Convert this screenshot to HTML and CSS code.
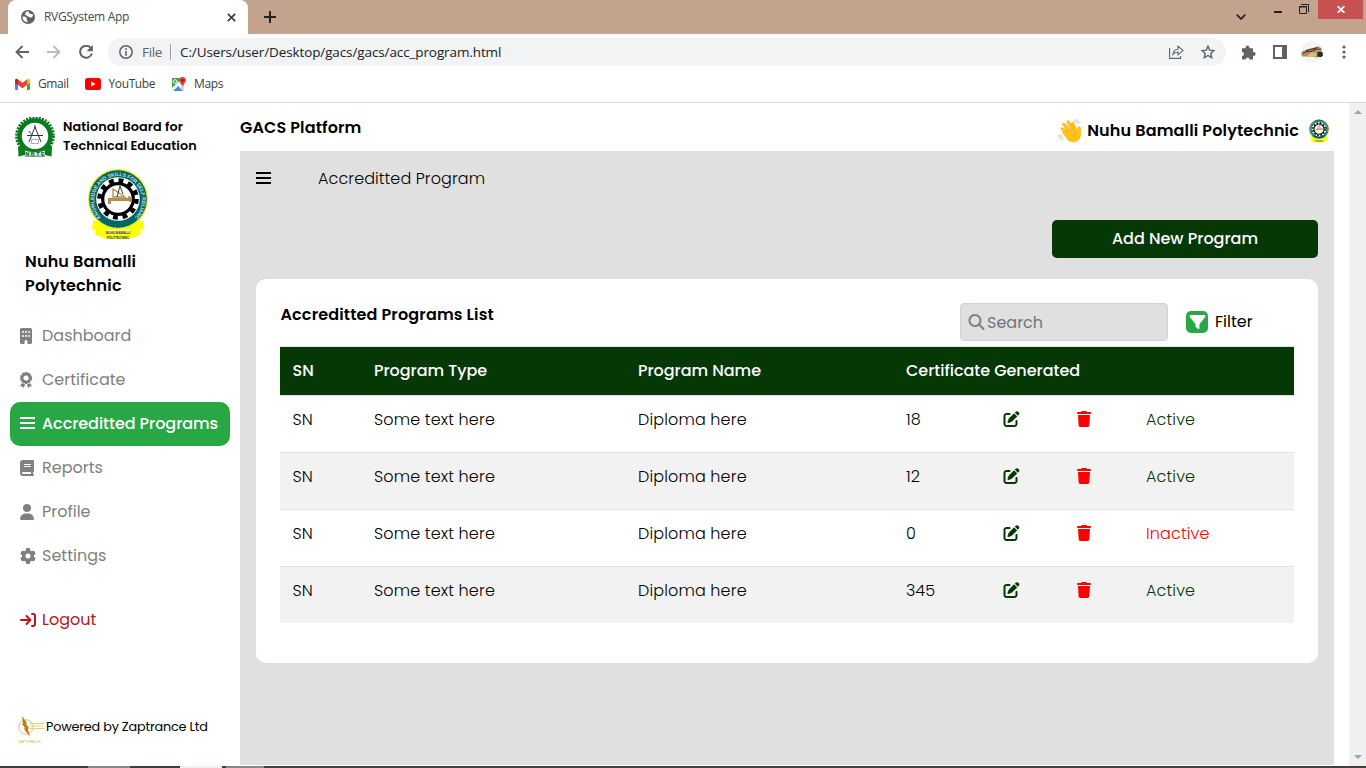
FILE: index.html
```html
<!DOCTYPE html>
<html lang="en">
<head>
<meta charset="utf-8">
<title>RVGSystem App</title>
<link rel="stylesheet" href="styles.css">
</head>
<body>
<svg class="defs" width="0" height="0">
  <defs>
    <symbol id="i-edit" viewBox="0 0 512 512"><path d="M471.6 21.7c-21.9-21.9-57.3-21.9-79.2 0L362.3 51.7l97.9 97.9 30.1-30.1c21.9-21.9 21.9-57.3 0-79.2L471.6 21.7zm-299.2 220c-6.1 6.1-10.8 13.6-13.5 21.9l-29.6 88.8c-2.9 8.6-.6 18.1 5.8 24.6s15.9 8.7 24.6 5.8l88.8-29.6c8.2-2.7 15.7-7.4 21.9-13.5L437.7 172.3 339.7 74.3 172.4 241.7zM96 64C43 64 0 107 0 160V416c0 53 43 96 96 96H352c53 0 96-43 96-96V320c0-17.7-14.3-32-32-32s-32 14.3-32 32v96c0 17.7-14.3 32-32 32H96c-17.7 0-32-14.3-32-32V160c0-17.7 14.3-32 32-32h96c17.7 0 32-14.3 32-32s-14.3-32-32-32H96z"/></symbol>
    <symbol id="i-trash" viewBox="0 0 448 512"><path d="M135.2 17.7L128 32H32C14.3 32 0 46.3 0 64S14.3 96 32 96H416c17.7 0 32-14.3 32-32s-14.3-32-32-32H320l-7.2-14.3C307.4 6.8 296.3 0 284.2 0H163.8c-12.1 0-23.2 6.8-28.6 17.7zM416 128H32L53.2 467c1.6 25.3 22.6 45 47.9 45H346.9c25.3 0 46.3-19.7 47.9-45L416 128z"/></symbol>
    <symbol id="i-bars" viewBox="0 0 14 16" preserveAspectRatio="none"><path d="M0 2h14v2H0zM0 7h14v2H0zM0 12h14v2H0z"/></symbol>
    <symbol id="seal" viewBox="0 0 60 71">
      <path d="M5 52l-1 9 4-1-1 5c4 3 9 3.500 12 5h22c3-1.500 8-2 12-5l-1-5 4 1-1-9z" fill="#ffff00"/>
      <circle cx="30" cy="30" r="30" fill="#eeee18"/>
      <circle cx="30" cy="30" r="28.8" fill="#006666"/>
      <circle cx="30" cy="30" r="21.8" fill="#fff"/>
      <circle cx="30" cy="30" r="18.5" fill="none" stroke="#000" stroke-width="4.5" stroke-dasharray="4.85 4.835"/>
      <circle cx="30" cy="30" r="15.3" fill="none" stroke="#000" stroke-width="3.2"/>
      <path d="M20 29h20v-2l3 1v5l-3-1H23v3h-3z" fill="#b28d50"/>
      <path d="M25 28v-8l12 8z" fill="none" stroke="#b28d50" stroke-width="1.3"/>
      <path d="M32 17l-3 11M32 17l3 8" stroke="#222" stroke-width=".9" fill="none"/>
      <path d="M18 60.500h24v3.500H18z" fill="#ffff90"/>
      <path id="seal-arc" d="M13.800 48.800A24 24 0 1 1 46.200 48.800" fill="none"/>
      <text class="seal-motto"><textPath href="#seal-arc" startOffset="1">KNOWLEDGE AND SKILLS FOR SELF RELIANCE</textPath></text>
      <text class="seal-name" x="30" y="65">NUHU BAMALLI</text>
      <text class="seal-name" x="30" y="69.500">POLYTECHNIC</text>
    </symbol>
  </defs>
</svg>
<div class="window">
  <div class="tabstrip">
    <div class="tab">
      <svg class="globe" viewBox="0 0 14 14"><circle cx="7" cy="7" r="7" fill="#5f6368"/><path d="M1.500 6.500l3 .2 1.300 1.600v2l1.400 1.900-2.700-.5C2.600 11 1.300 9 1.500 6.500zM5 1.800l3-.4-.2 1.700 1.800 1 2.600.2-1 2.900-1.500.3-2.200-.8L5.500 5.500 3.800 4.600z" fill="#fff"/></svg>
      <span class="tab-title">RVGSystem App</span>
      <svg class="tab-close" viewBox="0 0 9 9"><path d="M.8.8l7.400 7.400M8.200.8L.8 8.200" stroke="#3c4043" stroke-width="1.700"/></svg>
    </div>
    <svg class="new-tab" viewBox="0 0 12 12"><path d="M6 0v12M0 6h12" stroke="#222" stroke-width="2"/></svg>
    <div class="caption">
      <svg class="cap-chevron" viewBox="0 0 10 6"><path d="M.7.7L5 5 9.300.7" fill="none" stroke="#2a2522" stroke-width="1.800"/></svg>
      <svg class="cap-min" viewBox="0 0 8 2"><path d="M0 0h8v2H0z" fill="#222"/></svg>
      <svg class="cap-max" viewBox="0 0 10 10"><path d="M.5 3h7v6.500h-7zM0 2.500h8M2 .500h7.500V8" fill="none" stroke="#222"/></svg>
      <div class="cap-close"><svg viewBox="0 0 8 7"><path d="M.5 0l7 7M7.500 0l-7 7" stroke="#fff" stroke-width="1.700"/></svg></div>
    </div>
  </div>
  <div class="toolbar">
    <svg class="nav-icon" viewBox="0 0 14 14"><path d="M14 7H1.500M7.500 1L1.500 7l6 6" fill="none" stroke="#5f6368" stroke-width="1.900"/></svg>
    <svg class="nav-icon" viewBox="0 0 14 14"><path d="M0 7h12.500M6.500 1l6 6-6 6" fill="none" stroke="#bababa" stroke-width="1.900"/></svg>
    <svg class="nav-icon" viewBox="0 0 14 14"><path d="M12 3.200A6 6 0 1 0 12.900 8.500" fill="none" stroke="#5f6368" stroke-width="2"/><path d="M13.800 0v6.200H7.600z" fill="#5f6368"/></svg>
    <div class="omnibox">
      <svg class="info" viewBox="0 0 14 14"><circle cx="7" cy="7" r="6.200" fill="none" stroke="#5f6368" stroke-width="1.500"/><path d="M6.200 3.300h1.600v1.600H6.200zM6.200 6h1.600v4.700H6.200z" fill="#5f6368"/></svg>
      <span class="scheme">File</span>
      <span class="url">C:/Users/user/Desktop/gacs/gacs/acc_program.html</span>
      <svg class="share" viewBox="0 0 15 14"><path d="M.6 3v10.400h11V11M4 9.500C4.300 6.500 6 4.300 9 4.200V1.200l5 4.400-5 4.200V7C7 6.900 5.300 7.700 4 9.500z" fill="none" stroke="#5f6368" stroke-width="1.100"/></svg>
      <svg class="star" viewBox="0 0 14 14"><path d="M7 1.200l1.700 3.900 4.300.4-3.200 2.900.9 4.300L7 10.500l-3.700 2.200.9-4.300L1 5.500l4.300-.4z" fill="none" stroke="#5f6368" stroke-width="1.400"/></svg>
    </div>
    <svg class="puzzle" viewBox="0 0 15 15"><path d="M1 3.200h3.600a2 2 0 1 1 3.800 0H12V7a2 2 0 1 1 0 3.800v3.700H8.500a1.900 1.900 0 0 0-3.800 0H1V11a1.900 1.900 0 0 0 0-3.900z" fill="#5f6368"/></svg>
    <svg class="panel" viewBox="0 0 14 14"><path d="M1 1h12v12H1z" fill="#fff" stroke="#5f6368" stroke-width="2"/><path d="M9 0h5v14H9z" fill="#5f6368"/></svg>
    <svg class="avatar" viewBox="0 0 22 22"><circle cx="11" cy="11" r="11" fill="#f4f4f5"/><path d="M1 10l17-5 3 3-1 4-18 3z" fill="#caa878"/><path d="M0 12l12-3 10 3v3l-6 1.500-6-1H1z" fill="#b08b59"/><path d="M2 12l5-2 3 .5 4-2 6-.5M5 9.500l12-3" stroke="#433124" stroke-width="1.100" fill="none"/><path d="M11 11l7 2-5 3-7-1z" fill="#d6b98c"/><circle cx="19" cy="13.300" r="2.800" fill="#2b2b2e"/></svg>
    <svg class="kebab" viewBox="0 0 4 14"><circle cx="2" cy="2" r="1.600"/><circle cx="2" cy="7" r="1.600"/><circle cx="2" cy="12" r="1.600"/></svg>
  </div>
  <div class="bookmarks">
    <div class="bm bm-gmail"><svg viewBox="0 0 15 12"><path d="M0 2h3v10H1a1 1 0 0 1-1-1z" fill="#4285f4"/><path d="M12 2h3v9a1 1 0 0 1-1 1h-2z" fill="#34a853"/><path d="M12 1.500c1.200-1.200 3-.6 3 1V5l-3 2z" fill="#fbbc04"/><path d="M0 2.500c0-1.600 1.800-2.200 3-1V7L0 5z" fill="#c5221f"/><path d="M3 1.500l4.500 3.300L12 1.500V7l-4.500 3.200L3 7z" fill="#ea4335"/></svg><span>Gmail</span></div>
    <div class="bm bm-yt"><svg viewBox="0 0 16 12"><rect width="16" height="12" rx="2.500" fill="#f00"/><path d="M6.200 3.500v5L10.500 6z" fill="#fff"/></svg><span>YouTube</span></div>
    <div class="bm bm-maps"><svg viewBox="0 0 15 15"><path d="M1 1h12v13H1z" fill="#34a853"/><path d="M0 14L9 5l5 8-1 1z" fill="#f1f3f4"/><path d="M2 14l5-5 5 5z" fill="#4285f4"/><path d="M1 11l8-8 2 2-9 9H1z" fill="#f1f3f4"/><path d="M1 1h8L1 10z" fill="#34a853"/><path d="M13 8v6h-1L8.500 9.500z" fill="#dadce0"/><circle cx="4" cy="4.500" r="1.800" fill="none" stroke="#fff" stroke-width="1"/><path d="M11.500 0A3.300 3.300 0 0 0 8 3.500C8 6 11 6.500 11.500 10 12 6.500 15 6 15 3.500A3.300 3.300 0 0 0 11.500 0z" fill="#ea4335"/><circle cx="11.500" cy="3.400" r="1.300" fill="#8c1c13"/></svg><span>Maps</span></div>
  </div>
  <div class="viewport">
    <aside class="sidebar">
      <div class="brand">
        <svg class="nbte" viewBox="0 0 40 41"><circle cx="20" cy="19" r="18.500" fill="none" stroke="#0a7a1c" stroke-width="2.800" stroke-dasharray="2 1.230"/><circle cx="20" cy="19" r="15.500" fill="none" stroke="#0a7a1c" stroke-width="4.500"/><path d="M3 30l5-3c7 7 17 7 24 0l5 3-.5 9.500L30 38v2H10v-2l-6.500 1.500z" fill="#0c7d1e"/><path d="M10 33.500c6 2 14 2 20 0V39.500H10z" fill="#cfe3d2"/><path d="M20 8v3M20 10l-6 15M20 10l6 15M12 18.500h16M14 14l2.500 3.500" stroke="#333" stroke-width="1" fill="none"/><path d="M16.500 22.500h7v4h-7z" fill="#fff" stroke="#777" stroke-width=".6"/><text class="nbte-text" x="20" y="38.700">N B T E</text></svg>
        <div class="brand-name">National Board for<br>Technical Education</div>
      </div>
      <svg class="school-seal"><use href="#seal"/></svg>
      <div class="school-name">Nuhu Bamalli<br>Polytechnic</div>
      <nav class="menu">
        <a class="item"><svg class="w12" viewBox="0 0 12 16"><path fill-rule="evenodd" d="M1.500 0h9A1.500 1.500 0 0 1 12 1.500v13a1.500 1.500 0 0 1-1.500 1.500H7.500v-2.500a1.500 1.500 0 0 0-3 0V16h-3A1.500 1.500 0 0 1 0 14.500v-13A1.500 1.500 0 0 1 1.500 0zM2 3.200v1.600h2V3.200zM5 3.200v1.600h2V3.200zM8 3.200v1.600h2V3.200zM2 7.200v1.600h2V7.200zM5 7.200v1.600h2V7.200zM8 7.200v1.600h2V7.200z"/></svg><span>Dashboard</span></a>
        <a class="item"><svg class="w12" viewBox="0 0 12 16"><circle cx="6" cy="6" r="4" fill="none" stroke="currentColor" stroke-width="2.800"/><circle cx="6" cy="6" r="5.200" fill="none" stroke="currentColor" stroke-width="1.600" stroke-dasharray="2.500 .767"/><path d="M1.500 11.300L0 14.500l2.100-.2L3.500 16l1.800-3.500zM10.500 11.300l1.500 3.200-2.100-.2L8.500 16l-1.800-3.500z"/></svg><span>Certificate</span></a>
        <a class="item active"><svg class="w15"><use href="#i-bars"/></svg><span>Accreditted Programs</span></a>
        <a class="item"><svg viewBox="0 0 14 16"><path fill-rule="evenodd" d="M3 0h10a1 1 0 0 1 1 1v10a1 1 0 0 1-1 1v2a1 1 0 1 1 0 2H3a3 3 0 0 1-3-3V3a3 3 0 0 1 3-3zM3 12a1 1 0 0 0 0 2h8v-2zM4.500 4a.5.5 0 0 0 0 1h6a.5.5 0 0 0 0-1zM4.500 6a.5.5 0 0 0 0 1h6a.5.5 0 0 0 0-1z"/></svg><span>Reports</span></a>
        <a class="item"><svg viewBox="0 0 448 512"><path d="M224 256A128 128 0 1 0 224 0a128 128 0 1 0 0 256zm-45.700 48C79.800 304 0 383.800 0 482.300C0 498.700 13.300 512 29.700 512H418.300c16.400 0 29.700-13.300 29.700-29.700C448 383.800 368.200 304 269.700 304H178.300z"/></svg><span>Profile</span></a>
        <a class="item"><svg class="w16" viewBox="0 0 512 512"><path d="M495.900 166.600c3.200 8.700 .5 18.400-6.400 24.600l-43.300 39.400c1.100 8.300 1.700 16.800 1.700 25.400s-.6 17.100-1.700 25.400l43.300 39.400c6.900 6.200 9.600 15.900 6.400 24.600c-4.400 11.900-9.700 23.300-15.800 34.300l-4.700 8.100c-6.600 11-14 21.400-22.100 31.200c-5.900 7.200-15.700 9.600-24.500 6.800l-55.700-17.700c-13.400 10.300-28.200 18.900-44 25.400l-12.500 57.100c-2 9.100-9 16.300-18.200 17.800c-13.800 2.300-28 3.500-42.500 3.500s-28.700-1.200-42.500-3.500c-9.200-1.500-16.200-8.700-18.200-17.800l-12.500-57.100c-15.800-6.500-30.600-15.100-44-25.400L83.100 425.900c-8.800 2.800-18.600 .3-24.500-6.800c-8.100-9.800-15.500-20.200-22.100-31.200l-4.700-8.100c-6.100-11-11.400-22.400-15.800-34.300c-3.200-8.700-.5-18.400 6.400-24.600l43.300-39.400C64.600 273.100 64 264.600 64 256s.6-17.100 1.700-25.400L22.400 191.200c-6.900-6.200-9.600-15.900-6.400-24.600c4.400-11.900 9.700-23.300 15.800-34.300l4.700-8.100c6.600-11 14-21.400 22.100-31.200c5.900-7.200 15.700-9.600 24.500-6.800l55.700 17.700c13.400-10.300 28.200-18.900 44-25.400l12.500-57.100c2-9.100 9-16.300 18.200-17.800C227.300 1.200 241.500 0 256 0s28.700 1.200 42.500 3.500c9.200 1.500 16.200 8.700 18.200 17.800l12.500 57.100c15.800 6.500 30.600 15.100 44 25.400l55.700-17.700c8.800-2.800 18.600-.3 24.500 6.800c8.100 9.800 15.500 20.200 22.100 31.200l4.700 8.100c6.100 11 11.400 22.400 15.800 34.300zM256 336a80 80 0 1 0 0-160 80 80 0 1 0 0 160z"/></svg><span>Settings</span></a>
        <a class="item logout"><svg class="w16" viewBox="0 0 16 16"><path d="M1 8h9M6.500 4L10.500 8l-4 4M12 2h1a2 2 0 0 1 2 2v8a2 2 0 0 1-2 2h-1" fill="none" stroke="currentColor" stroke-width="2" stroke-linecap="round" stroke-linejoin="round"/></svg><span>Logout</span></a>
      </nav>
      <div class="powered">
        <svg viewBox="0 0 27 28"><circle cx="8" cy="11" r="7.200" fill="none" stroke="#dcbc8c" stroke-width="1"/><path d="M4 0l5 7-1 1 3 4-1 1 2 8-6-8 1-1-3-4 1-1z" fill="#c27c14"/><path d="M12 7.500h14M13 10h12M12 12.500h14" stroke="#e4d468" stroke-width="1"/><text x="11.500" y="27">ZAPTRANCE</text></svg>
        <span>Powered by Zaptrance Ltd</span>
      </div>
    </aside>
    <main class="main">
      <header class="topbar">
        <h1>GACS Platform</h1>
        <div class="account">
          <svg class="wave" viewBox="0 0 24 24"><path d="M4 9.500l8 7.500M5.500 5l8 9.500M10 2.800l7 10.500M14.800 4l3.200 7" stroke="#fcc21b" stroke-width="2.900" stroke-linecap="round"/><path d="M3.500 12.500l11-3.500 4.500 4c.6-1.500.5-3 .8-4.500.4-1.700 2.700-1.500 2.900.3.500 4 .8 8-1 11-2.200 3.700-7.700 4.700-11.700 1.700z" fill="#fcc21b"/><path d="M5.800 8.500l5.200 5M8.500 5l5.500 6.500M12.800 4l3.800 6M19 13c-3 .8-3.600 2.600-3.400 5" stroke="#e09c18" stroke-width=".7" fill="none"/><path d="M.8 15.500c0 2.800 1 4.500 3.700 5.500M3 15.500c0 2 .8 3 2.500 3.800M15.500 1c2 .3 3 1.300 3.500 3.500M18 .5c1.800.7 2.600 1.800 3 4" fill="none" stroke="#a9bdc6" stroke-width=".9"/></svg>
          <span class="account-name">Nuhu Bamalli Polytechnic</span>
          <svg class="mini-seal"><use href="#seal"/></svg>
        </div>
      </header>
      <section class="content">
        <div class="crumbs"><svg class="toggle"><use href="#i-bars"/></svg><span>Accreditted Program</span></div>
        <button class="add">Add New Program</button>
        <div class="card">
          <div class="card-head">
            <h2>Accreditted Programs List</h2>
            <div class="search"><svg viewBox="0 0 512 512"><path d="M416 208c0 45.900-14.900 88.300-40 122.700L502.600 457.400c12.500 12.500 12.500 32.800 0 45.300s-32.800 12.500-45.300 0L330.700 376c-34.400 25.200-76.800 40-122.700 40C93.100 416 0 322.900 0 208S93.100 0 208 0S416 93.100 416 208zM208 352a144 144 0 1 0 0-288 144 144 0 1 0 0 288z"/></svg><span>Search</span></div>
            <div class="filter"><span class="filter-icon"><svg viewBox="0 0 512 512"><path d="M3.900 54.900C10.500 40.900 24.500 32 40 32H472c15.500 0 29.500 8.900 36.100 22.900s4.600 30.500-5.200 42.500L320 320.900V448c0 12.100-6.800 23.200-17.700 28.600s-23.800 4.300-33.500-3l-64-48c-8.100-6-12.800-15.500-12.800-25.600V320.900L9 97.300C-.7 85.400-2.800 68.800 3.900 54.900z"/></svg></span><span>Filter</span></div>
          </div>
          <table class="programs">
            <colgroup><col class="c1"><col class="c2"><col class="c3"><col class="c4"><col class="c5"><col class="c6"><col class="c7"></colgroup>
            <thead><tr><th>SN</th><th>Program Type</th><th>Program Name</th><th colspan="4">Certificate Generated</th></tr></thead>
            <tbody>
              <tr><td>SN</td><td>Some text here</td><td>Diploma here</td><td class="num">18</td><td><svg class="edit"><use href="#i-edit"/></svg></td><td><svg class="trash"><use href="#i-trash"/></svg></td><td class="on">Active</td></tr>
              <tr><td>SN</td><td>Some text here</td><td>Diploma here</td><td class="num">12</td><td><svg class="edit"><use href="#i-edit"/></svg></td><td><svg class="trash"><use href="#i-trash"/></svg></td><td class="on">Active</td></tr>
              <tr><td>SN</td><td>Some text here</td><td>Diploma here</td><td class="num">0</td><td><svg class="edit"><use href="#i-edit"/></svg></td><td><svg class="trash"><use href="#i-trash"/></svg></td><td class="off">Inactive</td></tr>
              <tr><td>SN</td><td>Some text here</td><td>Diploma here</td><td class="num">345</td><td><svg class="edit"><use href="#i-edit"/></svg></td><td><svg class="trash"><use href="#i-trash"/></svg></td><td class="on">Active</td></tr>
            </tbody>
          </table>
        </div>
      </section>
    </main>
    <div class="scrollbar"><svg viewBox="0 0 8 4"><path d="M0 4l4-4 4 4z" fill="#a3a3a3"/></svg><svg viewBox="0 0 8 4"><path d="M0 0h8L4 4z" fill="#a3a3a3"/></svg></div>
  </div>
  <div class="taskbar"><i class="tk-a"></i><i class="tk-b"></i><i class="tk-c"></i></div>
</div>
</body>
</html>
```
FILE: styles.css
```css
* { box-sizing: border-box; }
body { margin: 0; background: #fff; color: #000; font-family: Poppins, Inter, sans-serif; font-size: 16px; line-height: 24px; overflow: hidden; }
svg { display: block; flex: none; }
.defs { position: absolute; }
.window { width: 1366px; height: 768px; display: flex; flex-direction: column; }

/* Browser frame */
.tabstrip { height: 34px; background: #c3a28e; display: flex; font-family: "Segoe UI", "Open Sans", sans-serif; }
.tab { width: 240px; margin-left: 8px; background: #fff; border-radius: 8px 8px 0 0; display: flex; align-items: center; padding: 0 12px 0 13px; }
.globe { width: 14px; height: 14px; }
.tab-title { flex: 1; margin-left: 9px; font-size: 12px; letter-spacing: -.32px; color: #45494d; }
.tab-close { width: 9px; height: 9px; }
.new-tab { width: 12px; height: 12px; margin: 11px 0 0 16px; }
.caption { margin-left: auto; display: flex; align-items: flex-start; }
.cap-chevron { width: 10px; height: 6px; margin: 14px 28px 0 0; }
.cap-min { width: 8px; height: 2px; margin: 11px 17px 0 0; }
.cap-max { width: 10px; height: 10px; margin: 4px 9px 0 0; }
.cap-close { width: 45px; height: 19px; margin-right: 3px; background: #c75050; display: flex; align-items: center; justify-content: center; }
.cap-close svg { width: 8px; height: 7px; }
.toolbar { height: 36px; display: flex; align-items: center; padding-left: 15px; font-family: "Segoe UI", "Open Sans", sans-serif; }
.nav-icon { width: 14px; height: 14px; margin-right: 18px; }
.omnibox { width: 1118px; height: 28px; margin-left: -3px; border-radius: 14px; background: #f1f3f4; display: flex; align-items: center; padding: 0 11px; font-size: 13.500px; }
.info { width: 14px; height: 14px; margin-right: 9px; }
.scheme { width: 29px; height: 16px; line-height: 16px; border-right: 1px solid #9aa0a6; color: #5f6368; letter-spacing: -.34px; }
.url { flex: 1; margin-left: 9px; color: #202124; letter-spacing: -.11px; }
.share { width: 15px; height: 14px; margin-right: 17px; }
.star { width: 14px; height: 14px; }
.puzzle { width: 15px; height: 15px; margin-left: 15px; }
.panel { width: 14px; height: 14px; margin-left: 17px; }
.avatar { width: 22px; height: 22px; margin-left: 14px; }
.kebab { width: 4px; height: 14px; margin-left: 19px; fill: #5f6368; }
.bookmarks { height: 33px; border-bottom: 1px solid #d9dadc; display: flex; padding: 1px 0 5px 15px; gap: 16px; font: 12px/26px "Segoe UI", "Open Sans", sans-serif; color: #3c4043; }
.bm { display: flex; align-items: center; gap: 8px; letter-spacing: -.4px; }
.bm-gmail svg { width: 15px; height: 12px; }
.bm-yt svg { width: 16px; height: 12px; }
.bm-maps svg { width: 15px; height: 15px; }

/* Page */
.viewport { height: 663px; display: flex; }
.sidebar { width: 240px; padding: 14px 10px 0; }
.brand { height: 41px; padding-left: 5px; display: flex; gap: 8px; }
.nbte { width: 40px; height: 41px; }
.nbte-text { font: 700 5.500px "Liberation Sans", sans-serif; fill: #1d4a26; text-anchor: middle; }
.brand-name { font-size: 12.800px; font-weight: 600; line-height: 19.200px; letter-spacing: .1px; white-space: nowrap; }
.school-seal { width: 60px; height: 71px; margin: 11px 0 0 78px; }
.seal-motto { font: 600 5.200px "Liberation Sans", sans-serif; fill: #c9dede; letter-spacing: -.15px; }
.seal-name { font: 700 3.200px "Liberation Sans", sans-serif; fill: #333; text-anchor: middle; }
.school-name { margin: 10px 0 16px 15px; font-weight: 600; letter-spacing: .15px; }
.item { height: 44px; display: flex; align-items: center; padding: 0 0 0 10px; border-radius: 10px; color: #808080; white-space: nowrap; }
.item svg { width: 14px; height: 16px; margin-right: 8px; fill: currentColor; }
.item .w12 { width: 12px; margin-right: 10px; }
.item .w15 { width: 15px; margin: -2px 7px 0 0; }
.item .w16 { width: 16px; margin-right: 6px; }
.item.active { background: #28a745; color: #fff; font-weight: 500; letter-spacing: -.05px; }
.item.logout { margin-top: 20px; color: #bb1518; }
.powered { height: 28px; margin-top: 74px; padding-left: 8px; display: flex; gap: 1px; font-size: 12.800px; letter-spacing: -.2px; line-height: 22px; white-space: nowrap; }
.powered svg { width: 27px; height: 28px; }
.powered text { font: 4px "Liberation Sans", sans-serif; fill: #cdbf60; text-anchor: middle; letter-spacing: -.2px; }
.main { width: 1094px; height: 662px; display: flex; flex-direction: column; }
.topbar { height: 48px; display: flex; justify-content: space-between; }
.topbar h1 { margin: 13px 0 0; font-size: 16px; font-weight: 600; letter-spacing: .13px; }
.account { display: flex; align-items: center; height: 56px; padding-right: 5px; }
.wave { width: 24px; height: 24px; margin-right: 5px; }
.account-name { font-weight: 600; letter-spacing: .15px; }
.mini-seal { width: 20px; height: 24px; margin-left: 10px; }
.content { flex: 1; background: #e0e0e0; padding: 16px 16px 0; display: flex; flex-direction: column; }
.crumbs { height: 24px; display: flex; align-items: center; font-weight: 300; letter-spacing: .08px; }
.toggle { width: 15px; height: 16px; margin: -2px 47px 0 0; }
.add { align-self: flex-end; width: 266px; height: 38px; margin-top: 29px; border: 0; border-radius: 5px; background: #053805; color: #fff; font: 500 16px/24px Poppins, Inter, sans-serif; }
.card { height: 384px; margin-top: 21px; padding: 24px; border-radius: 10px; background: #fff; }
.card-head { height: 43px; display: flex; align-items: flex-start; }
.card h2 { width: 680px; margin: 0; padding-left: .5px; font-size: 16px; font-weight: 600; letter-spacing: .14px; }
.search { width: 208px; height: 38px; border: 1px solid #ced4da; border-radius: 4px; background: #e0e0e0; display: flex; align-items: center; gap: 2px; padding-left: 7px; color: #6c757d; }
.search span { padding-top: 2px; }
.search svg { width: 17px; height: 16px; fill: #808080; }
.filter { height: 38px; margin-left: 18px; display: flex; align-items: center; gap: 7px; }
.filter-icon { width: 22px; height: 22px; border-radius: 5px; background: #28a745; display: flex; align-items: center; justify-content: center; }
.filter-icon svg { width: 17px; height: 16px; fill: #fff; }
.programs { width: 1014px; table-layout: fixed; border-collapse: separate; border-spacing: 0; }
.c1 { width: 82px; } .c2 { width: 264px; } .c3 { width: 268px; } .c4 { width: 97px; } .c5 { width: 74px; } .c6 { width: 69px; } .c7 { width: 160px; }
.programs th { height: 49px; padding: 12px; border-top: 1px solid #dee2e6; background: #053805; color: #fff; font-weight: 500; text-align: left; letter-spacing: -.03px; }
.programs td { height: 57px; padding: 12px; border-top: 1px solid #dee2e6; vertical-align: top; font-weight: 300; letter-spacing: .14px; }
.programs .num { letter-spacing: 0; }
.programs th:first-child, .programs td:first-child { padding-left: 12.500px; }
.programs tbody tr:nth-child(even) td { background: #f2f2f2; }
.programs .on { color: #053805; }
.programs .off { color: #f00; }
.edit { width: 17px; height: 16px; margin-top: 3px; fill: #053805; }
.trash { width: 14px; height: 16px; margin-top: 3px; fill: #f00; }
.scrollbar { width: 17px; margin-left: 15px; background: #f0f0f0; display: flex; flex-direction: column; justify-content: space-between; align-items: center; padding: 7px 0; }
.scrollbar svg { width: 8px; height: 4px; }
.taskbar { height: 2px; background: #4a3d35; display: flex; }
.tk-a { width: 42px; margin-left: 88px; background: #8d857f; }
.tk-b { width: 42px; margin-left: 50px; background: #f4f1e6; }
.tk-c { width: 38px; margin-left: 4px; background: #8d857f; }
```
